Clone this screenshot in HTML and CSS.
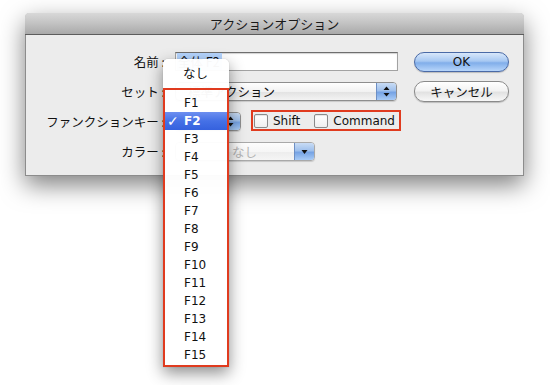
FILE: index.html
```html
<!DOCTYPE html>
<html lang="ja">
<head>
<meta charset="utf-8">
<title>アクションオプション</title>
<link rel="stylesheet" href="styles.css">
</head>
<body>
<div class="desk">
  <div class="window">
    <div class="titlebar">アクションオプション</div>
    <div class="content">
      <div class="form">
        <div class="lbl">名前 :</div>
        <div class="textfield"><span class="selected">全体 F2</span></div>
        <div class="btn btn-ok">OK</div>

        <div class="lbl">セット :</div>
        <div class="popup popup-set">
          <span class="ptext ptext-set">標準アクション</span>
          <span class="arrow">
            <svg width="7" height="11" viewBox="0 0 7 11"><path d="M3.5 0.5 L6.5 4 L0.5 4 Z M0.5 7 L6.5 7 L3.5 10.5 Z" fill="#111"/></svg>
          </span>
        </div>
        <div class="btn btn-cancel">キャンセル</div>

        <div class="lbl">ファンクションキー :</div>
        <div class="row3">
          <div class="popup popup-fn">
            <span class="ptext">F2</span>
            <span class="arrow">
              <svg width="7" height="11" viewBox="0 0 7 11"><path d="M3.5 0.5 L6.5 4 L0.5 4 Z M0.5 7 L6.5 7 L3.5 10.5 Z" fill="#111"/></svg>
            </span>
          </div>
          <div class="checks">
            <span class="check"><span class="box"></span>Shift</span>
            <span class="check"><span class="box"></span>Command</span>
          </div>
        </div>

        <div class="lbl">カラー :</div>
        <div class="popup popup-color">
          <span class="ptext ptext-color">なし</span>
          <span class="arrow">
            <svg width="7" height="6" viewBox="0 0 7 6"><path d="M0.5 1 L6.5 1 L3.5 5 Z" fill="#111"/></svg>
          </span>
        </div>
      </div>

      <div class="menu">
        <div class="item jp">なし</div>
        <div class="sep"></div>
        <div class="item">F1</div>
        <div class="item hl"><span class="tick">✓</span>F2</div>
        <div class="item">F3</div>
        <div class="item">F4</div>
        <div class="item">F5</div>
        <div class="item">F6</div>
        <div class="item">F7</div>
        <div class="item">F8</div>
        <div class="item">F9</div>
        <div class="item">F10</div>
        <div class="item">F11</div>
        <div class="item">F12</div>
        <div class="item">F13</div>
        <div class="item">F14</div>
        <div class="item">F15</div>
      </div>
      <div class="mark"></div>
    </div>
  </div>
</div>
</body>
</html>
```

FILE: styles.css
```css
html, body {
  margin: 0;
  background: #ffffff;
}
body {
  min-height: 385px;
  font-family: "DejaVu Sans", "Noto Sans CJK JP", sans-serif;
  font-size: 12px;
  color: #111;
}
.desk {
  padding: 13px 0 0 25px;
}
.window {
  width: 499px;
  box-sizing: border-box;
  background: #ececec;
  border: 1px solid #8c8c8c;
  border-top: none;
  border-radius: 5px 5px 0 0;
  box-shadow: 0 9px 24px rgba(0, 0, 0, 0.5);
}
.titlebar {
  height: 21px;
  line-height: 21px;
  text-align: center;
  font-family: "Noto Sans CJK JP", sans-serif;
  font-size: 13px;
  color: #1a1a1a;
  background: linear-gradient(#d8d8d8, #c2c2c2 50%, #a9a9a9);
  border-bottom: 1px solid #5c5c5c;
  border-radius: 4px 4px 0 0;
  margin: 0 -1px;
}
.content {
  position: relative;
  padding: 17px 0 13px 0;
}
.form {
  display: grid;
  grid-template-columns: 149px 223px 16px 95px;
  grid-auto-rows: 20px;
  row-gap: 10px;
}
.lbl {
  grid-column: 1;
  font-family: "Noto Sans CJK JP", sans-serif;
  font-size: 12.5px;
  line-height: 20px;
  text-align: right;
  padding-right: 10px;
  white-space: nowrap;
}
.textfield {
  height: 19px;
  box-sizing: border-box;
  background: #fff;
  border: 1px solid #a2a2a2;
  border-top-color: #6e6e6e;
  box-shadow: inset 0 1px 1px rgba(0, 0, 0, 0.18);
  padding-left: 1px;
  font-family: "Noto Sans CJK JP", sans-serif;
  font-size: 12.5px;
  line-height: 17px;
}
.selected {
  background: #b5d5ff;
  padding: 0 2px 0 1px;
  display: inline-block;
  height: 17px;
}
.btn {
  grid-column: 4;
  height: 20px;
  box-sizing: border-box;
  border-radius: 10px;
  text-align: center;
  line-height: 18px;
  font-size: 12px;
}
.btn-ok {
  border: 1px solid #4a6aa6;
  background: linear-gradient(#d8e7fa, #a7c8f2 45%, #81aeea 55%, #b7d5fa);
  box-shadow: 0 1px 1px rgba(0, 0, 0, 0.2);
}
.btn-cancel {
  height: 21px;
  margin-top: -1px;
  border: 1px solid #8a8a8a;
  background: linear-gradient(#ffffff, #f3f3f3 45%, #e2e2e2 55%, #f8f8f8);
  box-shadow: 0 1px 1px rgba(0, 0, 0, 0.2);
  font-family: "Noto Sans CJK JP", sans-serif;
  font-size: 12.5px;
  line-height: 19px;
}
.popup {
  height: 19px;
  box-sizing: border-box;
  border: 1px solid #8e8e8e;
  border-radius: 4px;
  background: linear-gradient(#ffffff, #f2f2f2 50%, #e3e3e3 55%, #f3f3f3);
  box-shadow: 0 1px 1px rgba(0, 0, 0, 0.15);
  display: flex;
  align-items: stretch;
  overflow: hidden;
}
.popup-set {
  width: 222px;
}
.ptext {
  flex: 1;
  font-family: "Noto Sans CJK JP", sans-serif;
  font-size: 12.5px;
  line-height: 17px;
  padding-left: 9px;
  white-space: nowrap;
  overflow: hidden;
}
.ptext-set {
  padding-left: 12px;
}
.ptext-color {
  padding-left: 56px;
  color: #b4b4b4;
}
.arrow {
  width: 19px;
  flex: none;
  border-left: 1px solid #6d8fc4;
  background: linear-gradient(#c9dcf5, #9fc0ec 45%, #76a3e4 55%, #a8cbf6);
  display: flex;
  align-items: center;
  justify-content: center;
}
.popup-color {
  width: 140px;
  background: linear-gradient(#fdfdfd, #f6f6f6 50%, #ededed 55%, #f5f5f5);
  border-color: #a9a9a9;
}
.row3 {
  display: flex;
  align-items: flex-start;
  gap: 10px;
  grid-column: 2 / span 3;
}
.popup-fn {
  width: 66px;
}
.checks {
  width: 150px;
  height: 21px;
  margin-top: -2px;
  box-sizing: border-box;
  border: 2px solid #e03b1f;
  display: flex;
  align-items: center;
  padding-left: 1px;
  gap: 14px;
}
.check {
  display: flex;
  align-items: center;
  gap: 5px;
  font-size: 12px;
}
.box {
  width: 14px;
  height: 14px;
  box-sizing: border-box;
  border: 1px solid #8a8a8a;
  border-radius: 2px;
  background: linear-gradient(#ffffff, #efefef);
  box-shadow: inset 0 1px 1px rgba(0, 0, 0, 0.1);
}
.menu {
  position: absolute;
  left: 137px;
  top: 24px;
  width: 66px;
  height: 308px;
  box-sizing: border-box;
  padding-top: 5px;
  background: rgba(255, 255, 255, 0.97);
  border-radius: 5px 5px 0 0;
  box-shadow: 0 6px 16px rgba(0, 0, 0, 0.45), 0 0 1px rgba(0, 0, 0, 0.3);
}
.item {
  position: relative;
  height: 18px;
  line-height: 18px;
  padding-left: 21px;
  font-size: 12px;
  color: #111;
}
.item.jp {
  font-family: "Noto Sans CJK JP", sans-serif;
  font-size: 12.5px;
  padding-left: 20px;
}
.sep {
  height: 12px;
}
.item.hl {
  background: linear-gradient(#6d8ff0, #4571e6 50%, #3561de);
  color: #fff;
  font-weight: bold;
}
.tick {
  position: absolute;
  left: 4px;
  top: 0;
  font-size: 14px;
  font-weight: bold;
}
.mark {
  position: absolute;
  left: 137px;
  top: 53px;
  width: 66px;
  height: 279px;
  box-sizing: border-box;
  border: 2px solid #e03b1f;
}
```
